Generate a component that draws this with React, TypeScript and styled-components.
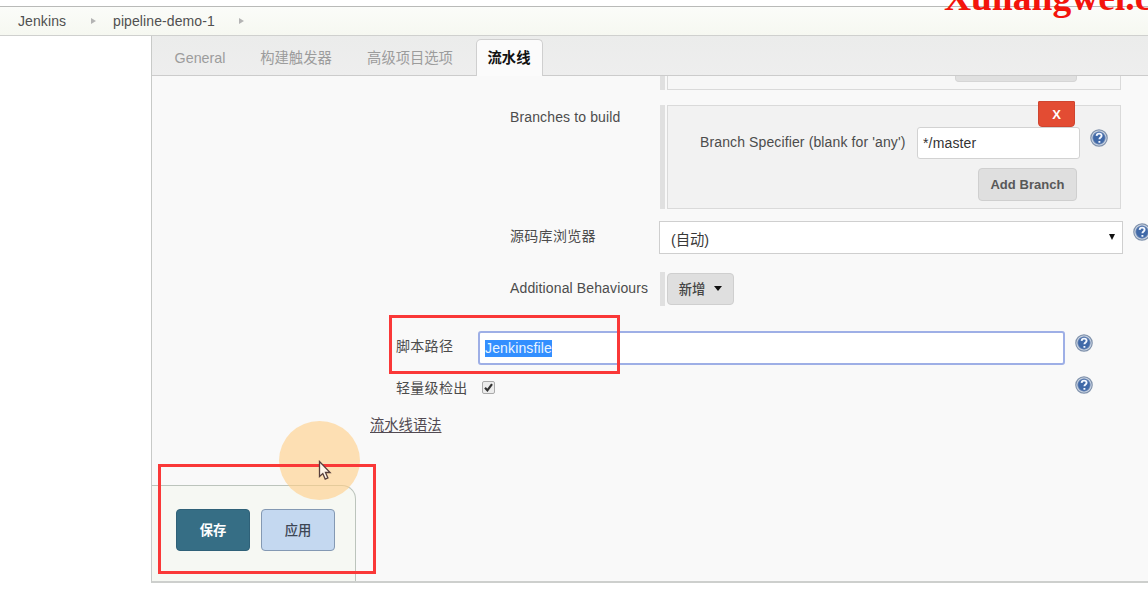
import React from 'react';
import styled, { createGlobalStyle, css } from 'styled-components';

const GlobalStyle = createGlobalStyle`
  * { box-sizing: border-box; }
  body {
    margin: 0;
    background: #fff;
    font-family: "Liberation Sans", Arial, "Noto Sans CJK SC", sans-serif;
    font-size: 14px;
    color: #4c4c4c;
  }
`;

const Page = styled.div`
  position: relative;
  width: 1148px;
  height: 594px;
  overflow: hidden;
  background: #fff;
  padding-top: 6px;
`;

const Breadcrumbs = styled.nav`
  display: flex;
  align-items: center;
  height: 30px;
  padding: 0 0 1px 18px;
  border-top: 1px solid #b9bab8;
  border-bottom: 1px solid #cfd0ce;
  background: linear-gradient(#fbfcf9, #f6f8f1);
  color: #505050;
`;

const Crumb = styled.span<{ $width: number }>`
  width: ${p => p.$width}px;
  white-space: nowrap;
  letter-spacing: 0.1px;
`;

const CrumbArrow = styled.span`
  width: 0;
  height: 0;
  margin: 1px 17px 0 25px;
  border: 3.5px solid transparent;
  border-left: 5px solid #b4b4b4;
  border-right: 0;
`;

const ConfigPanel = styled.main`
  display: flex;
  flex-direction: column;
  height: 547px;
  margin-left: 151px;
  border-left: 1px solid #c8cac8;
  border-bottom: 2px solid #cdcfcd;
  background: #f9f9f9;
`;

const TabBar = styled.div`
  display: flex;
  align-items: flex-end;
  height: 40px;
  flex: none;
  padding-left: 8px;
  background: linear-gradient(#ebeceb, #eeeeee);
  box-shadow: inset 0 -1px #cccccc;
`;

const Tab = styled.div<{ $active?: boolean; $width: number }>`
  display: flex;
  align-items: center;
  justify-content: center;
  width: ${p => p.$width}px;
  height: 37px;
  white-space: nowrap;
  font-size: 14.3px;
  line-height: 20px;
  color: #9c9c9c;
  ${p => p.$active && css`
    margin-left: 8px;
    padding: 0 1px 0 0;
    border: 1px solid #cfcfcf;
    border-bottom: 0;
    border-radius: 5px 5px 0 0;
    background: #fbfbfb;
    color: #111;
    font-weight: 700;
  `}
`;

const Form = styled.div`
  flex: 1;
  min-height: 0;
`;

const Row = styled.div<{ $height: number; $gap: number; $indent?: number }>`
  display: flex;
  align-items: flex-start;
  height: ${p => p.$height}px;
  margin-bottom: ${p => p.$gap}px;
  padding-left: ${p => p.$indent ?? 358}px;
`;

const Label = styled.label<{ $width: number; $top: number; $spacing?: number }>`
  flex: none;
  width: ${p => p.$width}px;
  padding-top: ${p => p.$top}px;
  line-height: 20px;
  letter-spacing: ${p => p.$spacing ?? 0}px;
  white-space: nowrap;
`;

const DragBar = styled.div`
  width: 5px;
  height: 100%;
  margin-right: 2px;
  background: #e0e0e0;
`;

const Chunk = styled.div<{ $open?: boolean }>`
  display: flex;
  flex-direction: column;
  width: 454px;
  height: 100%;
  border: 1px solid #dadada;
  border-top-width: ${p => (p.$open ? 0 : 1)}px;
  background: ${p => (p.$open ? '#f7f7f7' : '#f2f2f2')};
`;

const CutButton = styled.div`
  width: 122px;
  height: 6px;
  margin-left: 287px;
  border: 1px solid #d5d5d5;
  border-top: 0;
  border-radius: 0 0 4px 4px;
  background: #e0e0e0;
`;

const DeleteButton = styled.button`
  width: 37px;
  height: 26px;
  margin: -5px 0 0 370px;
  padding: 0;
  border: 1px solid #cf4530;
  border-radius: 1px 1px 4px 4px;
  background: #e34c33;
  color: #fff;
  font: 700 13px "Liberation Sans", Arial, sans-serif;
`;

const SpecifierLine = styled.div`
  display: flex;
  height: 33px;
  padding-left: 32px;
`;

const TextInput = styled.input`
  flex: none;
  width: 163px;
  height: 32px;
  padding: 0 5px;
  border: 1px solid #d2d2d2;
  border-radius: 3px;
  outline: 0;
  background: #fff;
  color: #333;
  font: 14px "Liberation Sans", Arial, sans-serif;
  letter-spacing: 0.15px;
`;

const FocusedField = styled.div`
  display: flex;
  align-items: center;
  width: 587px;
  height: 34px;
  padding-left: 5px;
  border: 2px solid #9eafe6;
  border-radius: 3px;
  background: #fff;
`;

const Selection = styled.span`
  height: 17px;
  line-height: 17px;
  background: #338fff;
  color: #e9f4ff;
  letter-spacing: 0.15px;
`;

const GreyButton = styled.button<{ $width: number }>`
  display: flex;
  align-items: center;
  justify-content: center;
  width: ${p => p.$width}px;
  height: 33px;
  padding: 0;
  border: 1px solid #cfcfcf;
  border-radius: 4px;
  background: #dfdfdf;
  color: #585858;
  font: 700 13px "Liberation Sans", Arial, "Noto Sans CJK SC", sans-serif;
`;

const AddBranch = styled(GreyButton)`
  margin: 8px 0 0 310px;
  flex: none;
  letter-spacing: 0.05px;
`;

const AddBehaviour = styled(GreyButton)`
  height: 32px;
  margin-top: 1px;
  padding-bottom: 2px;
  gap: 9px;
  font-size: 13.3px;
  font-weight: 500;
  color: #444;
`;

const Caret = styled.span`
  margin-top: 1px;
  border: 4.5px solid transparent;
  border-top: 5px solid #111;
  border-bottom: 0;
`;

const SelectBox = styled.div`
  display: flex;
  flex: none;
  align-items: center;
  justify-content: space-between;
  width: 464px;
  height: 33px;
  padding: 2px 7px 0 11px;
  border: 1px solid #cfcfcf;
  background: #fff;
  color: #383838;
  font-size: 14.3px;
`;

const SelectArrow = styled.span`
  margin-top: -3px;
  border: 3.5px solid transparent;
  border-top: 6px solid #111;
  border-bottom: 0;
`;

const Checkbox = styled.span`
  display: flex;
  width: 13px;
  height: 13px;
  margin: 5px 0 0 4px;
  border: 1px solid #aaa;
  border-radius: 2px;
  background: #ececec;
`;

const HelpSlot = styled.span<{ $left: number; $top: number }>`
  flex: none;
  height: 18px;
  margin: ${p => p.$top}px 0 0 ${p => p.$left}px;
  line-height: 0;
`;

const SyntaxLink = styled.a`
  line-height: 20px;
  font-size: 14.3px;
  color: #524a52;
  text-decoration: underline;
  text-underline-offset: 2px;
`;

const Footer = styled.div`
  display: flex;
  flex: none;
  gap: 11px;
  width: 204px;
  height: 96px;
  padding: 23px 0 0 24px;
  border: 1px solid #bcc4bc;
  border-left: 0;
  border-bottom-width: 0;
  border-radius: 0 14px 0 0;
  background: #f6f8f3;
`;

const ActionButton = styled.button<{ $primary?: boolean }>`
  width: 74px;
  height: 42px;
  padding: 0 0 2px;
  border: 1px solid ${p => (p.$primary ? '#2f6178' : '#8499b3')};
  border-radius: 4px;
  background: ${p => (p.$primary ? '#366e85' : '#c4d8f0')};
  color: ${p => (p.$primary ? '#fff' : '#3d4654')};
  font: ${p => (p.$primary ? 700 : 500)} 13.3px "Noto Sans CJK SC", sans-serif;
`;

const Watermark = styled.div`
  position: absolute;
  left: 944px;
  top: -24px;
  line-height: 44px;
  font-family: "Liberation Serif", "Times New Roman", serif;
  font-size: 37.5px;
  font-weight: 700;
  color: #f3140c;
  white-space: nowrap;
`;

const Highlight = styled.div<{ $x: number; $y: number; $w: number; $h: number }>`
  position: absolute;
  left: ${p => p.$x}px;
  top: ${p => p.$y}px;
  width: ${p => p.$w}px;
  height: ${p => p.$h}px;
  border: 3px solid #fa3838;
`;

const ClickSpot = styled.div`
  position: absolute;
  left: 279px;
  top: 421px;
  width: 81px;
  height: 79px;
  border-radius: 50%;
  background: rgba(255, 207, 135, 0.62);
`;

const Pointer = styled.svg`
  position: absolute;
  left: 318px;
  top: 460px;
`;

function Help({ left, top }: { left: number; top: number }) {
  return (
    <HelpSlot $left={left} $top={top}>
      <svg width="18" height="18" viewBox="0 0 18 18">
        <circle cx="9" cy="9" r="8.2" fill="#d3dce8" stroke="#8193ad" strokeWidth="1.2" />
        <circle cx="9" cy="9" r="6.2" fill="#4069a8" stroke="#6c86b3" strokeWidth=".8" />
        <path d="M6.6 6.9C6.7 5.3 7.7 4.6 9.1 4.6c1.5 0 2.5.8 2.5 2.1 0 1.8-2.2 1.8-2.2 3.6M9.4 12v1.7" fill="none" stroke="#f4f8ff" strokeWidth="1.9" />
      </svg>
    </HelpSlot>
  );
}

export default function App() {
  return (
    <Page>
      <GlobalStyle />
      <Breadcrumbs>
        <Crumb $width={48}>Jenkins</Crumb>
        <CrumbArrow />
        <Crumb $width={101}>pipeline-demo-1</Crumb>
        <CrumbArrow />
      </Breadcrumbs>
      <ConfigPanel>
        <TabBar>
          <Tab $width={80}>General</Tab>
          <Tab $width={112}>构建触发器</Tab>
          <Tab $width={116}>高级项目选项</Tab>
          <Tab $width={67} $active>流水线</Tab>
        </TabBar>
        <Form>
          <Row $height={14} $gap={15} $indent={508}>
            <DragBar />
            <Chunk $open><CutButton /></Chunk>
          </Row>
          <Row $height={104} $gap={12}>
            <Label $width={150} $top={2} $spacing={0.13}>Branches to build</Label>
            <DragBar />
            <Chunk>
              <DeleteButton>X</DeleteButton>
              <SpecifierLine>
                <Label $width={217} $top={5} $spacing={0.12}>Branch Specifier (blank for 'any')</Label>
                <TextInput defaultValue="*/master" />
                <Help left={10} top={2} />
              </SpecifierLine>
              <AddBranch $width={99}>Add Branch</AddBranch>
            </Chunk>
          </Row>
          <Row $height={33} $gap={18}>
            <Label $width={149} $top={5} $spacing={0.3}>源码库浏览器</Label>
            <SelectBox>(自动)<SelectArrow /></SelectBox>
            <Help left={10} top={2} />
          </Row>
          <Row $height={34} $gap={25}>
            <Label $width={150} $top={6} $spacing={0.13}>Additional Behaviours</Label>
            <DragBar />
            <AddBehaviour $width={67}>新增<Caret /></AddBehaviour>
          </Row>
          <Row $height={35} $gap={10} $indent={244}>
            <Label $width={82} $top={5} $spacing={0.3}>脚本路径</Label>
            <FocusedField><Selection>Jenkinsfile</Selection></FocusedField>
            <Help left={10} top={3} />
          </Row>
          <Row $height={26} $gap={13} $indent={244}>
            <Label $width={82} $top={2} $spacing={0.3}>轻量级检出</Label>
            <Checkbox>
              <svg width="11" height="11" viewBox="0 0 11 11">
                <path d="M2 5.8 4.4 8.3 9 2.2" fill="none" stroke="#333" strokeWidth="2.2" />
              </svg>
            </Checkbox>
            <Help left={580} top={0} />
          </Row>
          <Row $height={20} $gap={0} $indent={218}>
            <SyntaxLink>流水线语法</SyntaxLink>
          </Row>
        </Form>
        <Footer>
          <ActionButton $primary>保存</ActionButton>
          <ActionButton>应用</ActionButton>
        </Footer>
      </ConfigPanel>
      <Watermark>Xuliangwei.com</Watermark>
      <ClickSpot />
      <Highlight $x={389} $y={315} $w={231} $h={59} />
      <Highlight $x={158} $y={464} $w={218} $h={110} />
      <Pointer width="14" height="21" viewBox="0 0 14 21">
        <path d="M1.5 1.5v15l3.3-3 2.4 5.6 2.7-1.2-2.4-5.4h4.6z" fill="#fff5ea" stroke="#573f3c" strokeWidth="1.3" />
      </Pointer>
    </Page>
  );
}
